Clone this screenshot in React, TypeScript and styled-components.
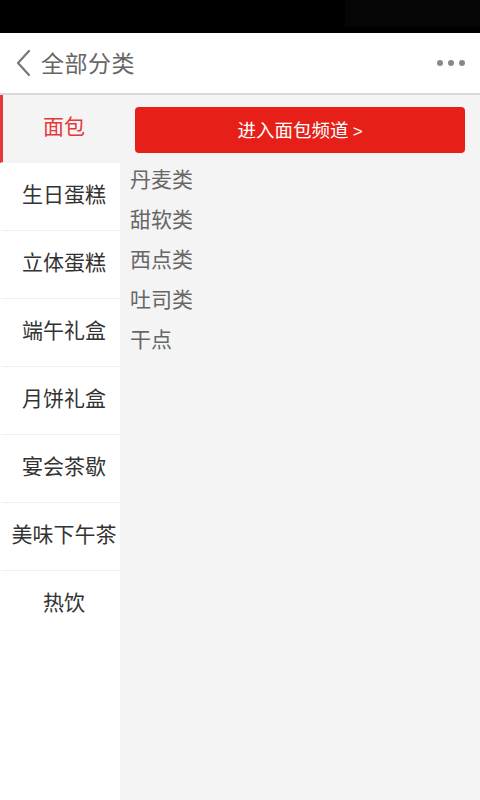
import React, { useState } from "react";
import styled, { createGlobalStyle } from "styled-components";

const GlobalStyle = createGlobalStyle`
  html, body {
    margin: 0;
    padding: 0;
    background: #ffffff;
    font-family: "Noto Sans CJK SC", "Noto Sans", sans-serif;
  }
  * {
    box-sizing: border-box;
  }
`;

const categories = [
  { name: "面包", subs: ["丹麦类", "甜软类", "西点类", "吐司类", "干点"] },
  { name: "生日蛋糕", subs: [] },
  { name: "立体蛋糕", subs: [] },
  { name: "端午礼盒", subs: [] },
  { name: "月饼礼盒", subs: [] },
  { name: "宴会茶歇", subs: [] },
  { name: "美味下午茶", subs: [] },
  { name: "热饮", subs: [] },
];

const App: React.FC = () => {
  const [active, setActive] = useState(0);
  const current = categories[active];

  return (
    <>
      <GlobalStyle />
      <Page>
        <StatusBar>
          <StatusShade />
        </StatusBar>
        <Header>
          <BackButton aria-label="返回">
            <svg width="16" height="28" viewBox="0 0 16 28">
              <polyline
                points="14,2 3,14 14,26"
                fill="none"
                stroke="#777"
                strokeWidth="2.2"
                strokeLinecap="round"
                strokeLinejoin="round"
              />
            </svg>
          </BackButton>
          <Title>全部分类</Title>
          <More>
            <Dot />
            <Dot />
            <Dot />
          </More>
        </Header>
        <Body>
          <Sidebar>
            {categories.map((c, i) => (
              <SideItem key={c.name} $active={i === active} onClick={() => setActive(i)}>
                {c.name}
              </SideItem>
            ))}
          </Sidebar>
          <Main>
            <ChannelButton>
              进入{current.name}频道 <Arrow>&gt;</Arrow>
            </ChannelButton>
            <SubList>
              {current.subs.map((s) => (
                <SubItem key={s}>{s}</SubItem>
              ))}
            </SubList>
          </Main>
        </Body>
      </Page>
    </>
  );
};

export default App;

const Page = styled.div`
  display: flex;
  flex-direction: column;
  width: 100%;
  height: 100vh;
  overflow: hidden;
`;

const StatusBar = styled.div`
  height: 33px;
  background: #000;
  display: flex;
  justify-content: flex-end;
  flex-shrink: 0;
`;

const StatusShade = styled.div`
  width: 135px;
  height: 27px;
  background: #050505;
`;

const Header = styled.header`
  height: 62px;
  flex-shrink: 0;
  display: flex;
  align-items: center;
  background: #fff;
  border-bottom: 2px solid #d8d8d8;
  padding: 0 15px 0 15px;
`;

const BackButton = styled.div`
  display: flex;
  align-items: center;
  width: 26px;
  cursor: pointer;
`;

const Title = styled.h1`
  margin: 0 0 3px;
  font-size: 23px;
  font-weight: normal;
  color: #666;
  letter-spacing: 0.5px;
`;

const More = styled.div`
  margin-left: auto;
  display: flex;
  gap: 5px;
`;

const Dot = styled.span`
  width: 6px;
  height: 6px;
  border-radius: 50%;
  background: #888;
`;

const Body = styled.div`
  flex: 1;
  display: flex;
  min-height: 0;
`;

const Sidebar = styled.nav`
  width: 120px;
  flex-shrink: 0;
  background: #fff;
  display: flex;
  flex-direction: column;
`;

const SideItem = styled.div<{ $active: boolean }>`
  height: 68px;
  display: flex;
  align-items: center;
  justify-content: center;
  padding: 0 0 7px 5px;
  font-size: 21px;
  white-space: nowrap;
  cursor: pointer;
  color: ${(p) => (p.$active ? "#e4393c" : "#333")};
  background: ${(p) => (p.$active ? "#f4f4f4" : "#fff")};
  border-left: 3px solid ${(p) => (p.$active ? "#e4393c" : "transparent")};
  border-bottom: 1px solid ${(p) => (p.$active ? "#f4f4f4" : "#efefef")};

  &:last-child {
    border-bottom-color: transparent;
  }
`;

const Main = styled.main`
  flex: 1;
  background: #f4f4f4;
  display: flex;
  flex-direction: column;
`;

const ChannelButton = styled.button`
  margin: 12px 15px 0 15px;
  height: 46px;
  padding-bottom: 3px;
  border: none;
  border-radius: 4px;
  background: #e61f19;
  color: #fff;
  font-family: "Noto Sans CJK SC", sans-serif;
  font-size: 18.5px;
  cursor: pointer;
`;

const Arrow = styled.span`
  font-family: "Liberation Sans", sans-serif;
  font-size: 17px;
`;

const SubList = styled.ul`
  list-style: none;
  margin: 5px 0 0;
  padding: 0 0 0 10px;
`;

const SubItem = styled.li`
  height: 40px;
  line-height: 40px;
  font-size: 21px;
  color: #666;
`;
